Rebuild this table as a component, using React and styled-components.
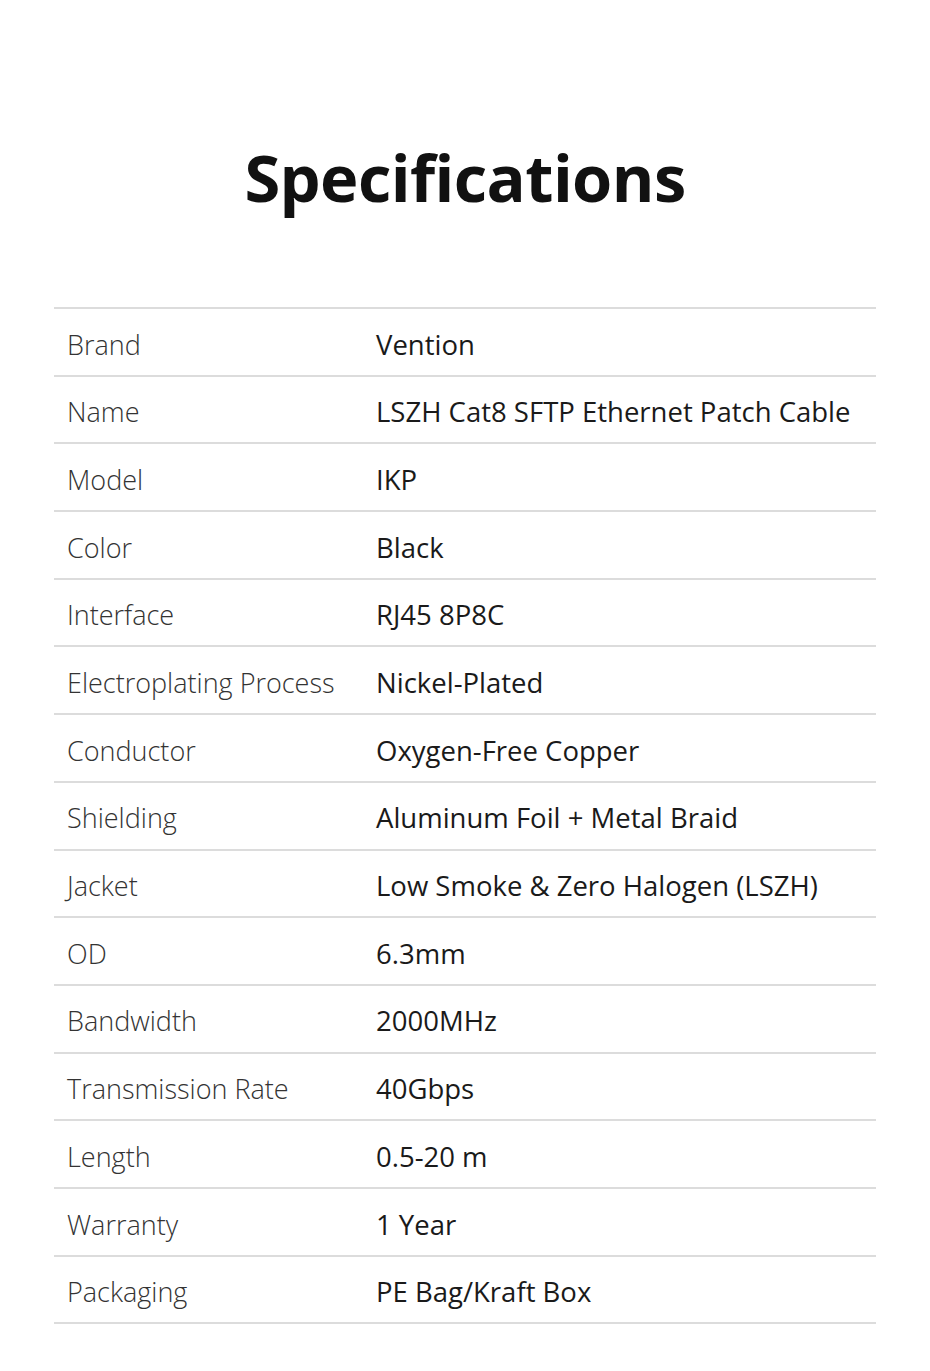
import styled, { createGlobalStyle } from 'styled-components';

const GlobalStyle = createGlobalStyle`
  body {
    margin: 0;
    background: #ffffff;
    font-family: "Open Sans", "Noto Sans", sans-serif;
  }
`;

const Page = styled.div`
  width: 930px;
  min-height: 1371px;
  background: #fff;
  padding: 137px 54px 0;
  box-sizing: border-box;
`;

const Title = styled.h1`
  margin: 0 0 90px;
  text-align: center;
  font-family: "Open Sans", sans-serif;
  font-weight: 700;
  font-size: 65px;
  line-height: 80px;
  letter-spacing: -0.6px;
  color: #111;
`;

const Table = styled.div`
  border-top: 2px solid #dcdcdc;
`;

const Row = styled.div`
  display: grid;
  grid-template-columns: 309px 1fr;
  height: 61.2px;
  padding: 4.5px 0 0 13px;
  align-items: center;
  border-bottom: 2px solid #dcdcdc;
`;

const Label = styled.div`
  font-size: 27px;
  font-weight: 300;
  color: #333;
`;

const Value = styled.div`
  font-size: 27.5px;
  font-weight: 500;
  color: #1a1a1a;
`;

const specs = [
  ['Brand', 'Vention'],
  ['Name', 'LSZH Cat8 SFTP Ethernet Patch Cable'],
  ['Model', 'IKP'],
  ['Color', 'Black'],
  ['Interface', 'RJ45 8P8C'],
  ['Electroplating Process', 'Nickel-Plated'],
  ['Conductor', 'Oxygen-Free Copper'],
  ['Shielding', 'Aluminum Foil + Metal Braid'],
  ['Jacket', 'Low Smoke & Zero Halogen (LSZH)'],
  ['OD', '6.3mm'],
  ['Bandwidth', '2000MHz'],
  ['Transmission Rate', '40Gbps'],
  ['Length', '0.5-20 m'],
  ['Warranty', '1 Year'],
  ['Packaging', 'PE Bag/Kraft Box'],
];

export default function App() {
  return (
    <Page>
      <GlobalStyle />
      <Title>Specifications</Title>
      <Table>
        {specs.map(([k, v]) => (
          <Row key={k}>
            <Label>{k}</Label>
            <Value>{v}</Value>
          </Row>
        ))}
      </Table>
    </Page>
  );
}
